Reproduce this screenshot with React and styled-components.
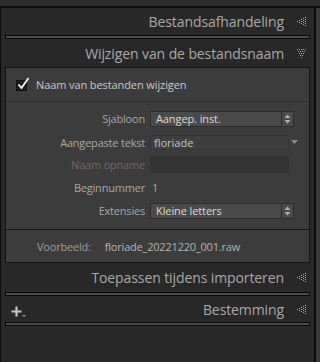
import React from "react";
import styled, { createGlobalStyle } from "styled-components";

const Global = createGlobalStyle`
  html, body { margin: 0; padding: 0; background: #2b2b2b; }
  body { font-family: "Open Sans", "Noto Sans", sans-serif; }
`;

const Screen = styled.div`
  width: 320px;
  height: 362px;
  display: flex;
  flex-direction: column;
  background: #2b2b2b;
  overflow: hidden;
`;

const TopEdge = styled.div`
  height: 6px;
  background: #2c2c2c;
  border-bottom: 2px solid #0c0c0c;
`;

const Frame = styled.div`
  flex: 1;
  display: flex;
`;

const LeftEdge = styled.div`
  width: 2px;
  background: #0c0c0c;
`;

const RightEdge = styled.div`
  width: 4px;
  background: #0c0c0c;
  border-right: 4px solid #383838;
`;

const Panel = styled.div`
  flex: 1;
  background: #282828;
  padding: 0 4px;
  display: flex;
  flex-direction: column;
`;

const Header = styled.div`
  height: ${(p) => p.$h || 27}px;
  display: flex;
  align-items: center;
  justify-content: flex-end;
  gap: 13px;
  padding-right: 4px;
  color: #a8a8a8;
  font-size: 14px;
  letter-spacing: -0.1px;
  position: relative;
`;

const CollapseBar = styled.div`
  height: 2px;
  border: 1px solid #0a0a0a;
  background: #4a4a4a;
`;

const Body = styled.div`
  background: #3c3c3c;
  border: 1px solid #151515;
  display: flex;
  flex-direction: column;
`;

const CheckRow = styled.label`
  height: 33px;
  display: flex;
  align-items: center;
  gap: 9px;
  padding-left: 10px;
  color: #c8c8c8;
  font-size: 11px;
  letter-spacing: -0.1px;
  border-bottom: 1px solid #333;
`;

const Box = styled.span`
  width: 9px;
  height: 9px;
  border: 1px solid #111;
  background: #1e1e1e;
  position: relative;
  margin-top: 2px;
`;

const Tick = styled.svg`
  position: absolute;
  left: 0px;
  top: -4px;
`;

const Form = styled.div`
  display: grid;
  grid-template-columns: 139px 1fr;
  column-gap: 5px;
  padding: 9px 11px 10px 0;
`;

const Label = styled.div`
  height: ${(p) => p.$h}px;
  line-height: ${(p) => p.$lh}px;
  text-align: right;
  font-size: 11px;
  letter-spacing: -0.2px;
  color: ${(p) => (p.$dim ? "#6b6b6b" : "#a8a8a8")};
`;

const Cell = styled.div`
  height: ${(p) => p.$h}px;
  display: flex;
  align-items: flex-start;
`;

const Select = styled.div`
  width: 144px;
  height: 16px;
  display: flex;
  border: 1px solid #2c2c2c;
  background: #4a4a4a;
  color: #dadada;
  font-size: 11px;
  letter-spacing: -0.1px;
  box-sizing: border-box;
`;

const SelectText = styled.span`
  flex: 1;
  padding-left: 5px;
  line-height: 14px;
`;

const Stepper = styled.span`
  width: 11px;
  border-left: 1px solid #2c2c2c;
  display: flex;
  align-items: center;
  justify-content: center;
`;

const Field = styled.div`
  width: 139px;
  height: ${(p) => p.$h}px;
  box-sizing: border-box;
  border: 1px solid ${(p) => (p.$off ? "#333" : "#353535")};
  background: ${(p) => (p.$off ? "#333333" : "#3e3e3e")};
  color: #c4c4c4;
  font-size: 11px;
  padding-left: 3px;
  line-height: 13px;
`;

const FieldWrap = styled.div`
  display: flex;
  align-items: center;
  gap: 2px;
`;

const PlainValue = styled.span`
  padding-left: 2px;
  font-size: 11px;
  line-height: 30px;
  color: #a8a8a8;
`;

const Preview = styled.div`
  height: 32px;
  border-top: 1px solid #151515;
  display: flex;
  align-items: center;
  padding-left: 31px;
  gap: 14px;
  font-size: 11px;
  letter-spacing: -0.2px;
  color: #9c9c9c;
`;

const PreviewName = styled.span`
  color: #b4b4b4;
`;

const AddIcon = styled.svg`
  position: absolute;
  left: 6px;
  top: 10px;
`;

const Fill = styled.div`
  flex: 1;
`;

function Dots({ down }) {
  const cells = [];
  if (down) {
    for (let r = 0; r < 5; r++) {
      for (let c = r; c <= 8 - r; c++) {
        if ((c + r) % 2 === 0) cells.push(<rect key={r + "-" + c} x={c} y={r * 2} width="1" height="1" />);
      }
    }
    return (
      <svg width="9" height="9" viewBox="0 0 9 9" fill="#a8a8a8">
        {cells}
      </svg>
    );
  }
  for (let c = 0; c < 5; c++) {
    for (let r = 4 - c; r <= 4 + c; r++) {
      if ((c + r) % 2 === 0) cells.push(<rect key={r + "-" + c} x={c * 2} y={r} width="1" height="1" />);
    }
  }
  return (
    <svg width="9" height="9" viewBox="0 0 9 9" fill="#a8a8a8">
      {cells}
    </svg>
  );
}

function Updown() {
  return (
    <svg width="7" height="10" viewBox="0 0 7 10" fill="#b0b0b0">
      <path d="M3.5 0.5 L6.5 4 H0.5 Z" />
      <path d="M3.5 9.5 L6.5 6 H0.5 Z" />
    </svg>
  );
}

function PanelHeader({ title, down, h, children }) {
  return (
    <Header $h={h}>
      {children}
      <span>{title}</span>
      <Dots down={down} />
    </Header>
  );
}

export default function App() {
  return (
    <Screen>
      <Global />
      <TopEdge />
      <Frame>
        <LeftEdge />
        <Panel>
          <PanelHeader title="Bestandsafhandeling" />
          <CollapseBar />
          <PanelHeader title="Wijzigen van de bestandsnaam" down h={28} />
          <Body>
            <CheckRow>
              <Box>
                <Tick width="14" height="14" viewBox="0 0 14 14">
                  <path d="M1.5 7.5 L4.5 11 L11.5 1" stroke="#f2f2f2" strokeWidth="1.8" fill="none" />
                </Tick>
              </Box>
              Naam van bestanden wijzigen
            </CheckRow>
            <Form>
              <Label $h={24} $lh={16}>Sjabloon</Label>
              <Cell $h={24}>
                <Select>
                  <SelectText>Aangep. inst.</SelectText>
                  <Stepper>
                    <Updown />
                  </Stepper>
                </Select>
              </Cell>
              <Label $h={21} $lh={15}>Aangepaste tekst</Label>
              <Cell $h={21}>
                <FieldWrap>
                  <Field $h={15}>floriade</Field>
                  <svg width="7" height="5" viewBox="0 0 7 5" fill="#8a8a8a">
                    <path d="M0 0 H7 L3.5 4 Z" />
                  </svg>
                </FieldWrap>
              </Cell>
              <Label $h={17} $lh={17} $dim>Naam opname</Label>
              <Cell $h={17}>
                <Field $h={17} $off />
              </Cell>
              <Label $h={30} $lh={30}>Beginnummer</Label>
              <Cell $h={30}>
                <PlainValue>1</PlainValue>
              </Cell>
              <Label $h={16} $lh={16}>Extensies</Label>
              <Cell $h={16}>
                <Select>
                  <SelectText>Kleine letters</SelectText>
                  <Stepper>
                    <Updown />
                  </Stepper>
                </Select>
              </Cell>
            </Form>
            <Preview>
              <span>Voorbeeld:</span>
              <PreviewName>floriade_20221220_001.raw</PreviewName>
            </Preview>
          </Body>
          <PanelHeader title="Toepassen tijdens importeren" h={29} />
          <CollapseBar />
          <PanelHeader title="Bestemming" h={26}>
            <AddIcon width="15" height="12" viewBox="0 0 15 12">
              <path d="M5.5 0.5 V10.5 M0.5 5.5 H10.5" stroke="#c4c4c4" strokeWidth="2.2" />
              <path d="M11 9 H15 L13 11 Z" fill="#9a9a9a" />
            </AddIcon>
          </PanelHeader>
          <CollapseBar />
          <Fill />
        </Panel>
        <RightEdge />
      </Frame>
    </Screen>
  );
}
